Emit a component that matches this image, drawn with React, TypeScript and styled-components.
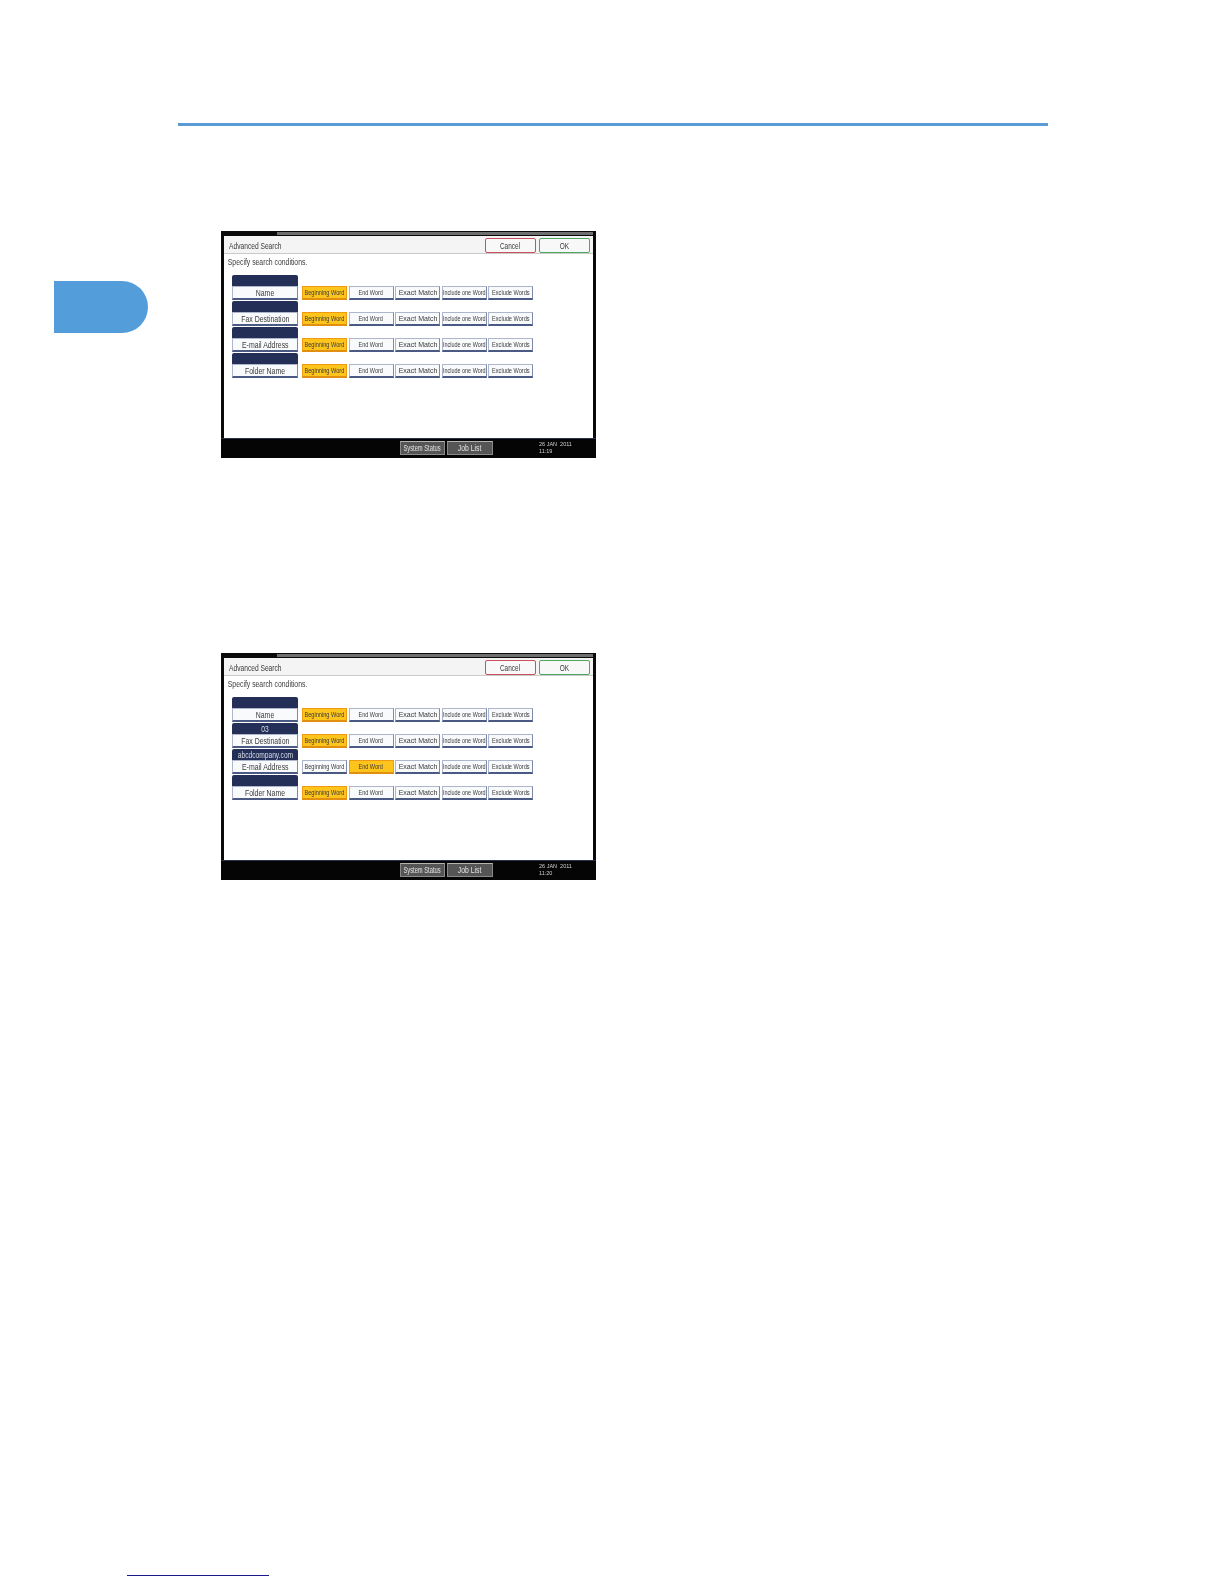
import styled, { createGlobalStyle } from 'styled-components';

const OPTIONS = [
  { label: 'Beginning Word', squeeze: 0.7 },
  { label: 'End Word', squeeze: 0.69 },
  { label: 'Exact Match', squeeze: 0.88 },
  { label: 'Include one Word', squeeze: 0.68 },
  { label: 'Exclude Words', squeeze: 0.7 },
];

type Row = { label: string; value: string; selected: number };

const FIRST_ROWS: Row[] = [
  { label: 'Name', value: '', selected: 0 },
  { label: 'Fax Destination', value: '', selected: 0 },
  { label: 'E-mail Address', value: '', selected: 0 },
  { label: 'Folder Name', value: '', selected: 0 },
];

const SECOND_ROWS: Row[] = [
  { label: 'Name', value: '', selected: 0 },
  { label: 'Fax Destination', value: '03', selected: 0 },
  { label: 'E-mail Address', value: 'abcdcompany.com', selected: 1 },
  { label: 'Folder Name', value: '', selected: 0 },
];

function SearchScreen({ rows, time }: { rows: Row[]; time: string }) {
  return (
    <Screen>
      <TopEdge />
      <Panel>
        <PanelHeader>
          <PanelTitle>Advanced Search</PanelTitle>
          <HeaderActions>
            <ActionButton $color="#c8505f">
              <Narrow $x={0.72}>Cancel</Narrow>
            </ActionButton>
            <ActionButton $color="#4fa860">
              <Narrow $x={0.72}>OK</Narrow>
            </ActionButton>
          </HeaderActions>
        </PanelHeader>
        <Prompt>Specify search conditions.</Prompt>
        <Rows>
          {rows.map((row) => (
            <ConditionRow key={row.label}>
              <Field>
                <FieldValue>
                  <Narrow $x={0.74}>{row.value}</Narrow>
                </FieldValue>
                <FieldLabel>
                  <Narrow $x={0.77}>{row.label}</Narrow>
                </FieldLabel>
              </Field>
              <Options>
                {OPTIONS.map((option, i) => (
                  <OptionButton key={option.label} $active={i === row.selected}>
                    <Narrow $x={option.squeeze}>{option.label}</Narrow>
                  </OptionButton>
                ))}
              </Options>
            </ConditionRow>
          ))}
        </Rows>
      </Panel>
      <StatusBar>
        <StatusButton $width={45}>
          <Narrow $x={0.64}>System Status</Narrow>
        </StatusButton>
        <StatusButton $width={46}>
          <Narrow $x={0.76}>Job List</Narrow>
        </StatusButton>
        <Clock>
          <span>26 JAN&nbsp;&nbsp;2011</span>
          <span>{time}</span>
        </Clock>
      </StatusBar>
    </Screen>
  );
}

export default function App() {
  return (
    <Page>
      <GlobalStyle />
      <HeaderRule />
      <Body>
        <ChapterTab />
        <Figures>
          <SearchScreen rows={FIRST_ROWS} time="11:19" />
          <SearchScreen rows={SECOND_ROWS} time="11:20" />
        </Figures>
      </Body>
      <FooterRule />
    </Page>
  );
}

const GlobalStyle = createGlobalStyle`
  html, body {
    margin: 0;
    background: #fff;
  }
`;

const Page = styled.div`
  width: 1224px;
  height: 1584px;
  box-sizing: border-box;
  padding-top: 123px;
  background: #fff;
  font-family: 'Liberation Sans', Arial, sans-serif;
  overflow: hidden;
`;

const HeaderRule = styled.div`
  width: 870px;
  height: 3px;
  margin-left: 178px;
  background: #5b9bd5;
`;

const Body = styled.div`
  display: flex;
  height: 1449px;
  padding-left: 54px;
`;

const ChapterTab = styled.div`
  width: 94px;
  height: 52px;
  margin-top: 155px;
  background: #549ddb;
  border-radius: 0 26px 26px 0;
`;

const Figures = styled.div`
  display: flex;
  flex-direction: column;
  gap: 195px;
  margin: 105px 0 0 73px;
`;

const Narrow = styled.span<{ $x: number }>`
  display: inline-block;
  white-space: nowrap;
  transform: scaleX(${({ $x }) => $x});
`;

const Screen = styled.div`
  position: relative;
  display: flex;
  flex-direction: column;
  width: 375px;
  height: 227px;
  box-sizing: border-box;
  padding-top: 5px;
  background: #0a0a0a;
  filter: blur(0.3px);
`;

const TopEdge = styled.div`
  position: absolute;
  top: 1px;
  left: 56px;
  right: 3px;
  height: 3px;
  background: #6f6f6f;
`;

const Panel = styled.div`
  flex: 1;
  margin: 0 3px;
  background: #fff;
  color: #3a3a3a;
`;

const PanelHeader = styled.div`
  display: flex;
  align-items: center;
  justify-content: space-between;
  height: 18px;
  box-sizing: border-box;
  padding: 2px 3px 0 5px;
  background: #f4f4f4;
  border-bottom: 1px solid #c9c9c9;
`;

const PanelTitle = styled.span`
  font-size: 9px;
  white-space: nowrap;
  transform: scaleX(0.74);
  transform-origin: left center;
`;

const HeaderActions = styled.div`
  display: flex;
  gap: 3px;
`;

const ActionButton = styled.div<{ $color: string }>`
  display: flex;
  align-items: center;
  justify-content: center;
  width: 51px;
  height: 15px;
  box-sizing: border-box;
  border: 1px solid ${({ $color }) => $color};
  border-radius: 2px;
  background: #f8f8f8;
  font-size: 9px;
`;

const Prompt = styled.div`
  height: 21px;
  box-sizing: border-box;
  padding: 3px 0 0 5px;
  font-size: 9px;
  white-space: nowrap;
  transform: scaleX(0.76);
  transform-origin: left center;
`;

const Rows = styled.div`
  display: flex;
  flex-direction: column;
  gap: 1px;
  padding-left: 8px;
`;

const ConditionRow = styled.div`
  display: flex;
  align-items: flex-end;
  gap: 4px;
  height: 25px;
`;

const Field = styled.div`
  display: flex;
  flex-direction: column;
  width: 66px;
`;

const FieldValue = styled.div`
  display: flex;
  align-items: center;
  justify-content: center;
  height: 11px;
  background: #232f57;
  border-radius: 2px 2px 0 0;
  color: #d8dcea;
  font-size: 9px;
`;

const FieldLabel = styled.div`
  display: flex;
  align-items: center;
  justify-content: center;
  height: 14px;
  box-sizing: border-box;
  background: #f9fafc;
  border: 1px solid #aeb6cb;
  border-right-color: #7f8aa8;
  border-bottom: 2px solid #4a5a85;
  font-size: 9px;
`;

const Options = styled.div`
  display: flex;
  gap: 1.5px;
`;

const OptionButton = styled.div<{ $active: boolean }>`
  display: flex;
  align-items: center;
  justify-content: center;
  width: 45px;
  height: 14px;
  box-sizing: border-box;
  border: 1px solid ${({ $active }) => ($active ? '#ef9a12' : '#aeb6cb')};
  border-right-color: ${({ $active }) => ($active ? '#ef9a12' : '#7f8aa8')};
  border-bottom: 2px solid ${({ $active }) => ($active ? '#e08f10' : '#4a5a85')};
  background: ${({ $active }) => ($active ? '#fdc41c' : '#f9fafc')};
  font-size: 8px;
`;

const StatusBar = styled.div`
  display: flex;
  align-items: flex-end;
  gap: 2px;
  height: 20px;
  box-sizing: border-box;
  padding: 0 0 3px 179px;
  border-top: 1px solid #24324a;
  background: #050505;
`;

const StatusButton = styled.div<{ $width: number }>`
  display: flex;
  align-items: center;
  justify-content: center;
  width: ${({ $width }) => $width}px;
  height: 14px;
  box-sizing: border-box;
  border: 1px solid #8a8a8a;
  border-top-color: #b4b4b4;
  background: #555;
  color: #e4e4e4;
  font-size: 9px;
`;

const Clock = styled.div`
  display: flex;
  flex-direction: column;
  margin-left: 44px;
  color: #d0d0d0;
  font-size: 5.5px;
  line-height: 7px;
`;

const FooterRule = styled.div`
  width: 142px;
  height: 1px;
  margin-left: 127px;
  background: #1a1a8c;
`;
